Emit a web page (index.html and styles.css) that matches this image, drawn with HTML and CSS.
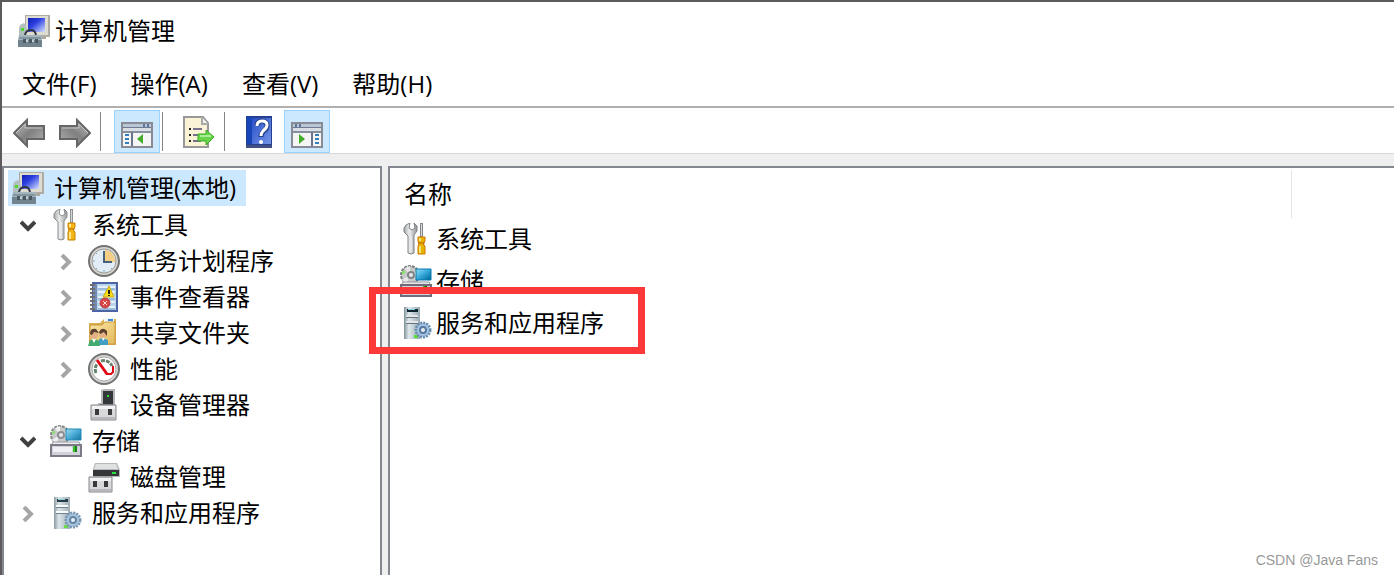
FILE: index.html
```html
<!DOCTYPE html>
<html lang="zh-CN">

<head>
    <meta charset="UTF-8" />
    <meta name="viewport" content="width=device-width, initial-scale=1.0" />
    <title>计算机管理</title>
    <link rel="stylesheet" href="styles.css">
</head>

<body>
    <!-- icon library -->
    <svg class="icon-defs" aria-hidden="true">
        <defs>
            <linearGradient id="gScreen" x1="0" y1="0" x2="1" y2="1">
                <stop offset="0" stop-color="#1020b0" />
                <stop offset=".4" stop-color="#2c40e0" />
                <stop offset="1" stop-color="#d8e4ff" />
            </linearGradient>
            <linearGradient id="gArrow" x1="0" y1="0" x2="1" y2="1">
                <stop offset="0" stop-color="#c0c0c0" />
                <stop offset=".5" stop-color="#808080" />
                <stop offset="1" stop-color="#b5b5b5" />
            </linearGradient>
            <linearGradient id="gMetal" x1="0" y1="0" x2="1" y2="0">
                <stop offset="0" stop-color="#a4a8aa" />
                <stop offset=".4" stop-color="#ececec" />
                <stop offset="1" stop-color="#9a9c9f" />
            </linearGradient>
            <linearGradient id="gTower" x1="0" y1="0" x2="1" y2="0">
                <stop offset="0" stop-color="#8b9aa1" />
                <stop offset=".3" stop-color="#dce5e8" />
                <stop offset="1" stop-color="#9dadb5" />
            </linearGradient>
            <linearGradient id="gBlue" x1="0" y1="0" x2="1" y2="1">
                <stop offset="0" stop-color="#9bdcf4" />
                <stop offset=".5" stop-color="#4aabd6" />
                <stop offset="1" stop-color="#1673a0" />
            </linearGradient>
            <linearGradient id="gFolder" x1="0" y1="0" x2="1" y2="1">
                <stop offset="0" stop-color="#fbe7a5" />
                <stop offset="1" stop-color="#e3b95c" />
            </linearGradient>
            <linearGradient id="gHelp" x1="0" y1="0" x2="1" y2="1">
                <stop offset="0" stop-color="#2a4fc8" />
                <stop offset="1" stop-color="#7396e8" />
            </linearGradient>

            <symbol id="computer" viewBox="0 0 32 32">
                <path d="M7 0h25v22H16l-8-3-1-4z" fill="#aeaba2" />
                <path d="M8 1h22v19H8z" fill="#dedbd0" />
                <path d="M10 3h17v14H10z" fill="url(#gScreen)" />
                <path d="M19 22h9v2h-9z" fill="#aaa79c" />
                <path d="M2 10l4-2 2 3 1 3-1 6H1v-7z" fill="#b4bfc0" />
                <path d="M3 13h3v3H3z" fill="#4ed92e" />
                <path d="M7 20q1-5 6-5 4 0 5 5" fill="none" stroke="#303742" stroke-width="2" />
                <path d="M1 20h23v5H0z" fill="#a5b5bc" />
                <path d="M0 25h24v7H0z" fill="#71838d" />
                <path d="M1 22h22v2H1z" fill="#8296a1" />
                <path d="M5 24h3v4H5zM11 24h3v4h-3zM17 24h3v4h-3z" fill="#4a5861" />
                <path d="M8 25h2v2H8zM14 25h2v2h-2z" fill="#c5d1d6" />
            </symbol>

            <symbol id="tools" viewBox="0 0 32 32">
                <path d="M6 2l4-2-1 5 3 2 3-2-1-5 3 3v5l-3 4v18q-3 2-6 0V13L4 9V5z" fill="url(#gMetal)" stroke="#8a8d8f" />
                <path d="M11 13v16" stroke="#f7f8f8" />
                <path d="M20 0h3v14h-3z" fill="#8d9294" />
                <path d="M21 1h1v12h-1z" fill="#d3d7d8" />
                <path d="M18 14h7v4l-2 3 2 2v8h-7v-8l1-2-1-3z" fill="#f3b615" stroke="#c78205" />
                <path d="M20 23v7M20 15v3" stroke="#ffe587" stroke-width="2" />
                <path d="M18 20h7" stroke="#b87400" />
            </symbol>

            <symbol id="clock" viewBox="0 0 32 32">
                <circle cx="16" cy="16" r="15" fill="#d7d4cf" stroke="#737373" stroke-width="2" />
                <circle cx="16" cy="16" r="12" fill="#e2edf5" stroke="#9a9a97" />
                <path d="M17 5a11 11 0 0 1 10 12H17z" fill="#f4ce82" />
                <path d="M16 6v11h8" fill="none" stroke="#46637d" stroke-width="2" />
                <path d="M16 27v-2M5 16h2M8 8l1 1M24 24l-1-1M8 24l1-1" stroke="#8aa5b8" />
            </symbol>

            <symbol id="events" viewBox="0 0 32 32">
                <path d="M5 2h24v28H5z" fill="#b9d5ea" stroke="#4c63a4" stroke-width="2" />
                <path d="M10 6h17M10 11h17M10 16h17M10 21h17M10 26h17" stroke="#e6f1f9" stroke-width="2" />
                <path d="M10 8h17M10 18h17M10 28h17" stroke="#7ea5cb" />
                <path d="M5 3h4v26H5z" fill="#758cb5" />
                <path d="M2 4h5M2 8h5M2 12h5M2 16h5M2 20h5M2 24h5M2 28h5" stroke="#707070" stroke-width="2" />
                <path d="M21 5l5 11H15z" fill="#f8de19" stroke="#c7a914" />
                <path d="M20 9h2v4h-2zM20 14h2v1h-2z" fill="#27220a" />
                <circle cx="17" cy="22" r="5" fill="#dc4646" stroke="#b2424a" />
                <path d="M15 20l4 4M19 20l-4 4" stroke="#ffe0dc" />
            </symbol>

            <symbol id="shared" viewBox="0 0 32 32">
                <path d="M1 6h11l4-4h12v26H1z" fill="#ddae4f" />
                <path d="M16 1h10v5H16z" fill="#f4f8fb" />
                <path d="M20 2h5v2h-5z" fill="#3c87d8" />
                <path d="M2 8h12l3-3h10v22H2z" fill="url(#gFolder)" stroke="#c79a40" />
                <circle cx="6" cy="18" r="4" fill="#e2b184" />
                <path d="M2 17q0-6 6-5l3 4-5-1-2 3z" fill="#5b4030" />
                <circle cx="15" cy="17" r="4" fill="#e2b184" />
                <path d="M11 15q3-6 8-1v5l-3-4-4 2z" fill="#5b4030" />
                <path d="M10 28l1-6 4-1 5 2v5z" fill="#439fc2" />
                <path d="M0 29l2-6 5-1 4 2 1 5z" fill="#41aa70" />
                <path d="M4 22l2 4 2-4zM14 21l1 3 2-3z" fill="#fff" />
            </symbol>

            <symbol id="gauge" viewBox="0 0 32 32">
                <circle cx="16" cy="16" r="15" fill="#d4d4d2" stroke="#737373" stroke-width="2" />
                <circle cx="16" cy="16" r="12" fill="#fff" stroke="#aaa" />
                <path d="M8 20a9 9 0 0 1 1-9M13 8a9 9 0 0 1 11 5" fill="none" stroke="#66836c" stroke-width="3" stroke-dasharray="4 1" />
                <path d="M9 7l10 14" stroke="#e00914" stroke-width="3" />
                <path d="M18 21h5l2-2v-6" fill="none" stroke="#e00914" stroke-width="2" />
            </symbol>

            <symbol id="device" viewBox="0 0 32 32">
                <path d="M13 1l3-1h11v17H10v-3h3z" fill="#b6b6b8" />
                <path d="M15 2h10v13H15z" fill="#34373a" />
                <path d="M19 6h2v2h-2z" fill="#2be329" />
                <path d="M12 15h13v2H12z" fill="#77797d" />
                <path d="M3 16h25v15H3z" fill="#d8d8da" stroke="#87878c" />
                <path d="M4 17h23v3H4z" fill="#f3f3f5" />
                <path d="M7 20h4v6H7zM20 20h4v6h-4z" fill="#3b3b3e" />
                <path d="M4 28h23v2H4z" fill="#b9b9bd" />
            </symbol>

            <symbol id="storage" viewBox="0 0 32 32">
                <circle cx="10" cy="10" r="9" fill="#c8caca" stroke="#85898a" stroke-width="2" stroke-dasharray="3 1" />
                <path d="M10 10L5 3l5-2zM10 10l8-4 1 5zM10 10l-8 5 4 4z" fill="#eff1f1" />
                <path d="M2 6h3v3H2z" fill="#91df76" />
                <circle cx="11" cy="10" r="3" fill="#e7e7e9" stroke="#8b8f94" stroke-width="2" />
                <path d="M16 4h15v11H16z" fill="url(#gBlue)" stroke="#2386b5" />
                <path d="M3 17h26l2 4H1z" fill="#ededf0" stroke="#9b9ba1" />
                <path d="M1 20h30v11H1z" fill="#d2d2da" stroke="#7d7a87" stroke-width="2" />
                <path d="M3 22h19v5H3z" fill="#f0f0f5" />
                <path d="M23 21h2v6h-2z" fill="#34c623" />
                <path d="M25 21h2v6h-2z" fill="#207c20" />
            </symbol>

            <symbol id="disk" viewBox="0 0 32 32">
                <path d="M7 2h22l3 7v7H5V8z" fill="#b8b9ba" />
                <path d="M8 3h20l2 5H6z" fill="#e0e1e1" />
                <path d="M5 9h26v6H5z" fill="#34363a" />
                <path d="M24 11h4v2h-4z" fill="#25e43b" />
                <path d="M1 16h23v15H1z" fill="#d8d8da" stroke="#87878c" />
                <path d="M2 17h21v3H2z" fill="#f2f2f4" />
                <path d="M5 20h4v6H5zM16 20h4v6h-4z" fill="#39393c" />
                <path d="M2 28h21v2H2z" fill="#b9b9bd" />
            </symbol>

            <symbol id="services" viewBox="0 0 32 32">
                <path d="M4 0h16v32H4z" fill="url(#gTower)" />
                <path d="M7 2h11v3H7z" fill="#283c43" />
                <path d="M8 2h7v1H8z" fill="#8fd1dd" />
                <path d="M6 8h12v2H6zM6 14h12v2H6z" fill="#f8fafb" />
                <path d="M6 10h12v1H6zM6 16h12v1H6z" fill="#70818b" />
                <path d="M14 28h4v3h-4z" fill="#67dd47" />
                <circle cx="23" cy="23" r="7" class="gear-teeth" fill="#a8c2da" stroke-width="3" stroke-dasharray="2 1" />
                <circle cx="23" cy="23" r="6" fill="#a9c4dd" />
                <circle cx="23" cy="23" r="3" class="gear-hub" fill="#e7f0f7" stroke-width="2" />
            </symbol>

            <symbol id="arrow" viewBox="0 0 32 32">
                <path d="M1 17L14 4v6h17v13H14v7z" fill="url(#gArrow)" stroke="#666" stroke-width="2" />
                <path d="M3 17l9-9v4h17" fill="none" stroke="#c6c6c6" />
            </symbol>

            <symbol id="pane" viewBox="0 0 32 32">
                <path d="M1 7h30v24H1z" fill="#f5f5f5" stroke="#888b93" stroke-width="2" />
                <path d="M2 8h28v3H2z" fill="#bac5d6" />
                <path d="M22 8h2v3h-2zM26 8h2v3h-2z" fill="#5d77a0" />
                <path d="M2 11h28v1H2z" fill="#6d7b92" />
                <path d="M2 12h28v3H2z" fill="#d9dde4" />
                <path d="M2 15h28v2H2z" fill="#888f9d" />
                <path d="M10 16h2v14h-2z" fill="#68758d" />
                <path d="M4 19h4M4 23h4M4 27h4" stroke="#377fbb" stroke-width="2" />
            </symbol>

            <symbol id="export" viewBox="0 0 32 32">
                <path d="M1 1h19l5 6v24H1z" fill="#fbf3d5" stroke="#999" stroke-width="2" />
                <path d="M19 1v7h6" fill="#f4f4f4" stroke="#aaa" stroke-width="2" />
                <path d="M6 12h2v2H6zM6 18h2v2H6zM6 24h2v2H6z" fill="#222" />
                <path d="M10 13h9M10 19h8M10 25h8" stroke="#77718a" stroke-width="2" />
                <path d="M15 18h8v-4l8 7-8 8v-4h-8z" fill="#68d34b" stroke="#39ad22" />
                <path d="M17 20h11" stroke="#aceb95" stroke-width="2" />
            </symbol>

            <symbol id="help" viewBox="0 0 32 32">
                <path d="M1 0h26v32H1z" fill="#263f8e" />
                <path d="M2 1h5v27H2z" fill="#1646b7" />
                <path d="M7 2h19v26H7z" fill="url(#gHelp)" />
                <path d="M1 29h26v3H1z" fill="#405080" />
                <path d="M12 10q0-5 5-5 5 0 5 5 0 3-3 5-3 2-3 6" fill="none" stroke="#24418d" stroke-width="5" />
                <path d="M12 10q0-5 5-5 5 0 5 4 0 3-4 6-2 2-2 5" fill="none" stroke="#fff" stroke-width="3" />
                <circle cx="16" cy="26" r="2" fill="#fff" />
            </symbol>

            <symbol id="chevron" viewBox="0 0 16 16">
                <path d="M4 1l7 7-7 7" fill="none" stroke="currentColor" stroke-width="4" />
            </symbol>
        </defs>
    </svg>

    <div class="window">
        <header class="titlebar">
            <svg class="icon"><use href="#computer" /></svg>
            <h1>计算机管理</h1>
        </header>

        <nav class="menubar">
            <button type="button">文件(F)</button>
            <button type="button">操作(A)</button>
            <button type="button">查看(V)</button>
            <button type="button">帮助(H)</button>
        </nav>

        <div class="toolbar">
            <button type="button" aria-label="后退"><svg class="icon"><use href="#arrow" /></svg></button>
            <button type="button" aria-label="前进"><svg class="icon flip"><use href="#arrow" /></svg></button>
            <span class="separator"></span>
            <button type="button" class="active" aria-label="显示/隐藏控制台树">
                <svg class="icon" viewBox="0 0 32 32">
                    <use href="#pane" />
                    <path d="M22 18v10l-6-5z" fill="#43ad2a" />
                </svg>
            </button>
            <span class="separator"></span>
            <button type="button" aria-label="导出列表"><svg class="icon"><use href="#export" /></svg></button>
            <span class="separator"></span>
            <button type="button" aria-label="帮助"><svg class="icon"><use href="#help" /></svg></button>
            <button type="button" class="active" aria-label="显示/隐藏操作窗格">
                <svg class="icon flip" viewBox="0 0 32 32">
                    <use href="#pane" />
                    <path d="M24 18v10l-6-5z" fill="#43ad2a" />
                </svg>
            </button>
        </div>

        <main class="content">
            <aside class="tree">
                <a href="#" class="root selected"><svg class="icon"><use href="#computer" /></svg>计算机管理(本地)</a>
                <ul>
                    <li>
                        <div class="node">
                            <button type="button" class="toggle open" aria-label="折叠"><svg><use href="#chevron" /></svg></button>
                            <a href="#"><svg class="icon"><use href="#tools" /></svg>系统工具</a>
                        </div>
                        <ul>
                            <li class="node">
                                <button type="button" class="toggle" aria-label="展开"><svg><use href="#chevron" /></svg></button>
                                <a href="#"><svg class="icon"><use href="#clock" /></svg>任务计划程序</a>
                            </li>
                            <li class="node">
                                <button type="button" class="toggle" aria-label="展开"><svg><use href="#chevron" /></svg></button>
                                <a href="#"><svg class="icon"><use href="#events" /></svg>事件查看器</a>
                            </li>
                            <li class="node">
                                <button type="button" class="toggle" aria-label="展开"><svg><use href="#chevron" /></svg></button>
                                <a href="#"><svg class="icon"><use href="#shared" /></svg>共享文件夹</a>
                            </li>
                            <li class="node">
                                <button type="button" class="toggle" aria-label="展开"><svg><use href="#chevron" /></svg></button>
                                <a href="#"><svg class="icon"><use href="#gauge" /></svg>性能</a>
                            </li>
                            <li class="node leaf">
                                <a href="#"><svg class="icon"><use href="#device" /></svg>设备管理器</a>
                            </li>
                        </ul>
                    </li>
                    <li>
                        <div class="node">
                            <button type="button" class="toggle open" aria-label="折叠"><svg><use href="#chevron" /></svg></button>
                            <a href="#"><svg class="icon"><use href="#storage" /></svg>存储</a>
                        </div>
                        <ul>
                            <li class="node leaf">
                                <a href="#"><svg class="icon"><use href="#disk" /></svg>磁盘管理</a>
                            </li>
                        </ul>
                    </li>
                    <li class="node">
                        <button type="button" class="toggle" aria-label="展开"><svg><use href="#chevron" /></svg></button>
                        <a href="#"><svg class="icon"><use href="#services" /></svg>服务和应用程序</a>
                    </li>
                </ul>
            </aside>

            <section class="details">
                <table>
                    <thead>
                        <tr>
                            <th scope="col">名称</th>
                            <td class="filler"></td>
                        </tr>
                    </thead>
                    <tbody>
                        <tr>
                            <td colspan="2"><a href="#"><svg class="icon dark"><use href="#tools" /></svg>系统工具</a></td>
                        </tr>
                        <tr>
                            <td colspan="2"><a href="#"><svg class="icon dark"><use href="#storage" /></svg>存储</a></td>
                        </tr>
                        <tr>
                            <td colspan="2"><a href="#" class="marked"><svg class="icon dark"><use href="#services" /></svg>服务和应用程序</a></td>
                        </tr>
                    </tbody>
                </table>
            </section>
        </main>
        <div class="watermark">CSDN @Java Fans</div>
    </div>
</body>

</html>
```
FILE: styles.css
```css
* {
    box-sizing: border-box;
    margin: 0;
    padding: 0;
}

body {
    font-family: "Open Sans", "Noto Sans CJK SC", sans-serif;
    font-size: 24px;
    line-height: 36px;
    color: #000;
    background-color: #fff;
}

button {
    font: inherit;
    color: inherit;
    background: none;
    border: none;
}

a {
    color: inherit;
    text-decoration: none;
}

ul {
    list-style: none;
}

.icon-defs {
    position: absolute;
    width: 0;
    height: 0;
}

.icon {
    width: 32px;
    height: 32px;
    flex-shrink: 0;
}

.flip {
    transform: scaleX(-1);
}

.window {
    position: relative;
    display: flex;
    flex-direction: column;
    min-height: 100vh;
    border-top: 2px solid #5c5a5c;
    border-left: 2px solid #5c5a5c;
}

.titlebar {
    display: flex;
    align-items: center;
    gap: 5px;
    height: 60px;
    padding: 0 16px 2px;
}

.titlebar h1 {
    font-size: 24px;
    font-weight: normal;
}

.menubar {
    display: flex;
    height: 46px;
    padding-left: 3px;
    border-bottom: 2px solid #b0b0b0;
}

.menubar button {
    padding: 0 17px;
}

.toolbar {
    display: flex;
    height: 46px;
    padding: 2px 4px 0;
    border-bottom: 1px solid #d9d9d9;
}

.toolbar button {
    display: flex;
    align-items: center;
    justify-content: center;
    width: 46px;
    border: 1px solid transparent;
}

.toolbar .active {
    background-color: #cce8ff;
    border-color: #99d1ff;
}

.separator {
    width: 1px;
    margin: 2px 13px 2px 2px;
    background-color: #858585;
}

.content {
    flex: 1;
    display: flex;
    gap: 6px;
    padding-top: 12px;
    background-color: #efefef;
}

.tree {
    width: 380px;
    flex-shrink: 0;
    padding: 2px 4px;
    background-color: #fff;
    border: 2px solid #828790;
    border-bottom: none;
}

.root {
    display: inline-flex;
    align-items: center;
    gap: 10px;
    height: 36px;
    margin-bottom: 1px;
    padding: 0 10px 0 4px;
    vertical-align: top;
}

.selected {
    background-color: #cce8ff;
}

.node {
    display: flex;
    align-items: center;
    height: 36px;
    padding-left: 12px;
}

.node a {
    display: flex;
    align-items: center;
    gap: 10px;
}

.node.leaf {
    padding-left: 42px;
}

.tree ul ul {
    padding-left: 38px;
}

.toggle {
    display: flex;
    width: 16px;
    height: 16px;
    margin: 2px 14px 0 0;
    color: #a6a6a6;
}

.toggle svg {
    width: 16px;
    height: 16px;
}

.toggle.open {
    color: #404040;
    transform: rotate(90deg);
}

.details {
    flex: 1;
    padding-top: 2px;
    background-color: #fff;
    border-top: 2px solid #828790;
    border-left: 2px solid #828790;
}

table {
    width: 100%;
    border-collapse: collapse;
}

th {
    height: 48px;
    padding-left: 14px;
    font-weight: normal;
    text-align: left;
    border-right: 1px solid #e5e5e5;
}

.filler {
    width: 103px;
}

tbody td {
    height: 42px;
    padding-left: 10px;
}

tbody a {
    display: inline-flex;
    align-items: center;
    gap: 4px;
    vertical-align: top;
}

.gear-teeth {
    stroke: #7897b5;
}

.gear-hub {
    stroke: #6685a6;
}

.dark {
    filter: contrast(1.3) brightness(0.9);
}

.marked {
    position: relative;
}

/* red frame around the entry */
.marked::after {
    content: "";
    position: absolute;
    top: -18px;
    bottom: -13px;
    left: -31px;
    right: -41px;
    border: 7px solid #fc3838;
}

.watermark {
    position: absolute;
    right: 16px;
    bottom: 5px;
    font-family: "Liberation Sans", sans-serif;
    font-size: 14px;
    line-height: 20px;
    color: #999;
}
```
